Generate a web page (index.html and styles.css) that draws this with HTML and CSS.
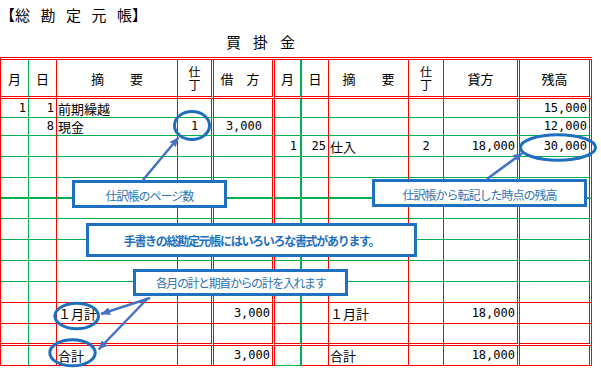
FILE: index.html
```html
<!DOCTYPE html>
<html lang="ja">
<head>
<meta charset="utf-8">
<title>総勘定元帳</title>
<link rel="stylesheet" href="styles.css">
</head>
<body>
<div class="sheet">
  <div class="head">
    <div class="title"><span>【</span><span class="k">総</span><span class="k">勘</span><span class="k">定</span><span class="k">元</span><span>帳</span><span>】</span></div>
    <div class="sub">買掛金</div>
  </div>

  <div class="ledger">
    <div class="r hd">
      <div>月</div><div>日</div><div>摘　　要</div><div class="st"><span>仕丁</span></div><div class="kari">借　方</div>
      <div>月</div><div>日</div><div>摘　　要</div><div class="st"><span>仕丁</span></div><div>貸方</div><div>残高</div>
    </div>
    <div class="r">
      <div class="n">1</div><div class="n">1</div><div class="t">前期繰越</div><div></div><div></div>
      <div></div><div></div><div></div><div></div><div></div><div class="n">15,000</div>
    </div>
    <div class="r">
      <div></div><div class="n">8</div><div class="t">現金</div><div class="c">1</div><div class="n off">3,000</div>
      <div></div><div></div><div></div><div></div><div></div><div class="n">12,000</div>
    </div>
    <div class="r">
      <div></div><div></div><div></div><div></div><div></div>
      <div class="n m1">1</div><div class="n">25</div><div class="t">仕入</div><div class="c">2</div><div class="n">18,000</div><div class="n">30,000</div>
    </div>
    <div class="r">
      <div></div><div></div><div></div><div></div><div></div><div></div><div></div><div></div><div></div><div></div><div></div>
    </div>
    <div class="r thick">
      <div></div><div></div><div></div><div></div><div></div><div></div><div></div><div></div><div></div><div></div><div></div>
    </div>
    <div class="r">
      <div></div><div></div><div></div><div></div><div></div><div></div><div></div><div></div><div></div><div></div><div></div>
    </div>
    <div class="r">
      <div></div><div></div><div></div><div></div><div></div><div></div><div></div><div></div><div></div><div></div><div></div>
    </div>
    <div class="r">
      <div></div><div></div><div></div><div></div><div></div><div></div><div></div><div></div><div></div><div></div><div></div>
    </div>
    <div class="r">
      <div></div><div></div><div></div><div></div><div></div><div></div><div></div><div></div><div></div><div></div><div></div>
    </div>
    <div class="r red">
      <div></div><div></div><div></div><div></div><div></div><div></div><div></div><div></div><div></div><div></div><div></div>
    </div>
    <div class="r red">
      <div></div><div></div><div class="t">１月計</div><div></div><div class="n">3,000</div>
      <div></div><div></div><div class="t">１月計</div><div></div><div class="n">18,000</div><div></div>
    </div>
    <div class="r dbl">
      <div></div><div></div><div></div><div></div><div></div><div></div><div></div><div></div><div></div><div></div><div></div>
    </div>
    <div class="r red last">
      <div></div><div></div><div class="t">合計</div><div></div><div class="n">3,000</div>
      <div></div><div></div><div class="t">合計</div><div></div><div class="n">18,000</div><div></div>
    </div>
  </div>

  <div class="note n1">仕訳帳のページ数</div>
  <div class="note n2">仕訳帳から転記した時点の残高</div>
  <div class="note n3">手書きの総勘定元帳にはいろいろな書式があります。</div>
  <div class="note n4">各月の計と期首からの計を入れます</div>

  <svg class="marks" width="601" height="388" viewBox="0 0 601 388" aria-hidden="true">
    <defs>
      <marker id="ah" markerWidth="9" markerHeight="8" refX="9" refY="4" orient="auto" markerUnits="userSpaceOnUse">
        <path d="M0,0 L9,4 L0,8 Z" fill="#4472c4"/>
      </marker>
    </defs>
    <g fill="none" stroke="#1f6fbf" stroke-width="3">
      <ellipse cx="192" cy="125.5" rx="17.5" ry="14"/>
      <ellipse cx="558" cy="147.5" rx="37.5" ry="12.7"/>
      <ellipse cx="76.7" cy="316" rx="21.8" ry="12.7"/>
      <ellipse cx="72.5" cy="352.8" rx="22.7" ry="13"/>
    </g>
    <g stroke="#4472c4" stroke-width="2.5" marker-end="url(#ah)">
      <line x1="143" y1="180" x2="178.5" y2="137.5"/>
      <line x1="487" y1="179" x2="522.5" y2="153"/>
      <line x1="150" y1="298" x2="101" y2="314"/>
      <line x1="148" y1="298" x2="98.5" y2="349.5"/>
    </g>
  </svg>
</div>
</body>
</html>
```

FILE: styles.css
```css
html, body {
  margin: 0;
  padding: 0;
  background: #ffffff;
}

body {
  font-family: "Noto Sans CJK JP", "Noto Sans", sans-serif;
  color: #000000;
  width: 601px;
  height: 388px;
  overflow: hidden;
}

.sheet {
  position: relative;
  width: 601px;
  height: 388px;
}

.head {
  height: 57px;
  box-sizing: border-box;
  padding-top: 5px;
}

.title {
  display: flex;
  font-size: 15px;
  line-height: 20px;
  height: 20px;
  white-space: nowrap;
}

.title .k {
  margin-right: 10.5px;
}

.sub {
  margin-top: 7px;
  padding-left: 226px;
  font-size: 15px;
  line-height: 20px;
  letter-spacing: 12px;
}

/* ledger grid */
.ledger {
  display: grid;
  grid-template-columns: 28px 28px 121px 36px 61px 27px 27px 80px 35px 76px 72px;
  grid-template-rows: 39px 19px 18px 21px 21px 21px 20px 21px 21px 21px 21px 21px 22px 20px;
  width: max-content;
  border-left: 1px solid #ff0000;
  border-top: 3px double #ff0000;
}

.r {
  display: contents;
}

.r > div {
  box-sizing: border-box;
  display: flex;
  align-items: center;
  min-width: 0;
  border-right: 1px solid #ff0000;
  border-bottom: 1px solid #00b050;
  font-size: 13px;
  line-height: 15px;
  white-space: nowrap;
}

.r > div:nth-child(1) {
  border-right-color: #00b050;
}

.r > div:nth-child(4),
.r > div:nth-child(5),
.r > div:nth-child(10),
.r > div:nth-child(11) {
  border-right: 3px double #ff0000;
}

.r > div:nth-child(6) {
  border-right: 2px solid #00b050;
}

.hd > div {
  border-bottom: 3px double #ff0000;
  justify-content: center;
}

.hd > .st span {
  writing-mode: vertical-rl;
  font-size: 12px;
  line-height: 13px;
  letter-spacing: 1px;
  padding-top: 1px;
}

.hd > .kari {
  padding-right: 6px;
}

.thick > div {
  border-bottom: 2px solid #00b050;
}

.red > div {
  border-bottom-color: #ff0000;
}

.dbl > div {
  border-bottom: 3px double #ff0000;
}

.last > div:nth-child(6) {
  border-bottom-color: #00b050;
}

.n {
  justify-content: flex-end;
  padding-right: 2px;
  font-family: "DejaVu Sans Mono", monospace;
  font-size: 12px !important;
}

.n.off {
  padding-right: 10px;
}

.n.m1 {
  padding-right: 3px;
}

.t {
  padding-left: 1px;
}

.c {
  justify-content: center;
  font-family: "DejaVu Sans Mono", monospace;
  font-size: 12px !important;
}

/* callouts */
.note {
  position: absolute;
  box-sizing: border-box;
  display: flex;
  align-items: center;
  justify-content: center;
  background: #ffffff;
  border: 3px solid #1f70c1;
  color: #2e75b6;
  font-size: 12px;
  letter-spacing: -1px;
  white-space: nowrap;
}

.n1 {
  left: 72px;
  top: 180px;
  width: 155px;
  height: 28px;
  padding-top: 3px;
}

.n2 {
  left: 372px;
  top: 179px;
  width: 215px;
  height: 28px;
  padding-top: 2px;
}

.n3 {
  left: 86px;
  top: 223px;
  width: 331px;
  height: 34px;
  font-weight: bold;
  color: #1f6fc0;
  letter-spacing: -1.3px;
}

.n4 {
  left: 133px;
  top: 269px;
  width: 215px;
  height: 27px;
  letter-spacing: -1.4px;
}

.marks {
  position: absolute;
  left: 0;
  top: 0;
  pointer-events: none;
}
```
